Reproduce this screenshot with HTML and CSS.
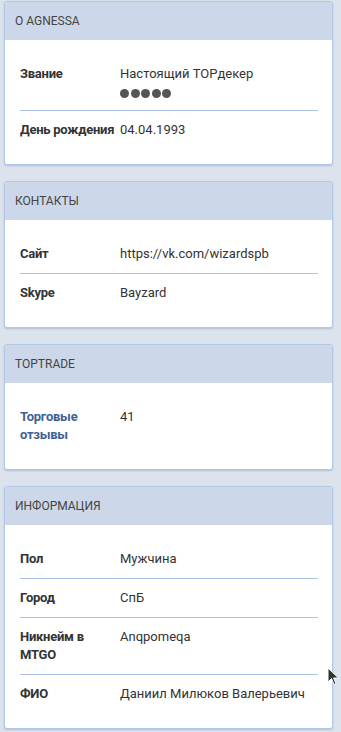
FILE: index.html
```html
<!DOCTYPE html>
<html lang="ru">
<head>
    <meta charset="UTF-8">
    <meta name="viewport" content="width=device-width, initial-scale=1.0">
    <title>Профиль</title>
    <link rel="stylesheet" href="styles.css">
</head>
<body>
    <div class="page">
        <div class="block">
            <div class="block-head">O Agnessa</div>
            <div class="block-body">
                <div class="row">
                    <div class="label">Звание</div>
                    <div class="value">
                        Настоящий TOPдекер
                        <div class="rank">
                            <span></span><span></span><span></span><span></span><span></span>
                        </div>
                    </div>
                </div>
                <div class="row">
                    <div class="label">День рождения</div>
                    <div class="value">04.04.1993</div>
                </div>
            </div>
        </div>

        <div class="block">
            <div class="block-head">Контакты</div>
            <div class="block-body">
                <div class="row">
                    <div class="label">Сайт</div>
                    <div class="value">https://vk.com/wizardspb</div>
                </div>
                <div class="row">
                    <div class="label">Skype</div>
                    <div class="value">Bayzard</div>
                </div>
            </div>
        </div>

        <div class="block">
            <div class="block-head">Toptrade</div>
            <div class="block-body">
                <div class="row">
                    <div class="label link">Торговые отзывы</div>
                    <div class="value">41</div>
                </div>
            </div>
        </div>

        <div class="block">
            <div class="block-head">Информация</div>
            <div class="block-body">
                <div class="row">
                    <div class="label">Пол</div>
                    <div class="value">Мужчина</div>
                </div>
                <div class="row">
                    <div class="label">Город</div>
                    <div class="value">СпБ</div>
                </div>
                <div class="row">
                    <div class="label">Никнейм в MTGO</div>
                    <div class="value">Anqpomeqa</div>
                </div>
                <div class="row">
                    <div class="label">ФИО</div>
                    <div class="value">Даниил Милюков Валерьевич</div>
                </div>
            </div>
        </div>
    </div>
    <svg class="cursor" width="13" height="20" viewBox="0 0 13 20">
        <path d="M1 1 L1 15 L4.5 11.5 L7 17.5 L9 16.7 L6.6 11 L11.5 11 Z" fill="#333" stroke="#fff" stroke-width="1"/>
    </svg>
</body>
</html>
```

FILE: styles.css
```css
*{
    padding: 0;
    margin: 0;
    box-sizing: border-box;
    font-family: Roboto, 'Liberation Sans', sans-serif;
}
body{
    background-color: #dce3ec;
    color: #333;
    font-size: 13px;
}
.page{
    padding: 1px 8px 0 4px;
}
.block{
    background: #fff;
    border: 1px solid #b3c7e6;
    border-radius: 3px;
    box-shadow: 0 1px 2px rgba(90, 120, 170, 0.35);
    margin-bottom: 16px;
    overflow: hidden;
}
.block-head{
    background: #ccd8e9;
    height: 38px;
    line-height: 38px;
    padding-left: 10px;
    font-size: 12px;
    color: #444;
    text-transform: uppercase;
}
.block-body{
    padding: 15px 14px 15px 15px;
}
.row{
    display: flex;
    padding: 10px 0;
    line-height: 18px;
}
.row + .row{
    border-top: 1px solid #a9c3e8;
}
.label{
    width: 100px;
    flex-shrink: 0;
    font-weight: bold;
    letter-spacing: -0.25px;
    color: #333;
}
.label.link{
    color: #3e6296;
}
.value{
    flex: 1;
}
.rank{
    display: flex;
    gap: 1.5px;
    height: 17px;
    padding-top: 3px;
    align-items: center;
}
.rank span{
    width: 9px;
    height: 9px;
    border-radius: 50%;
    background: #555;
}
.cursor{
    position: absolute;
    left: 327px;
    top: 667px;
}
```
